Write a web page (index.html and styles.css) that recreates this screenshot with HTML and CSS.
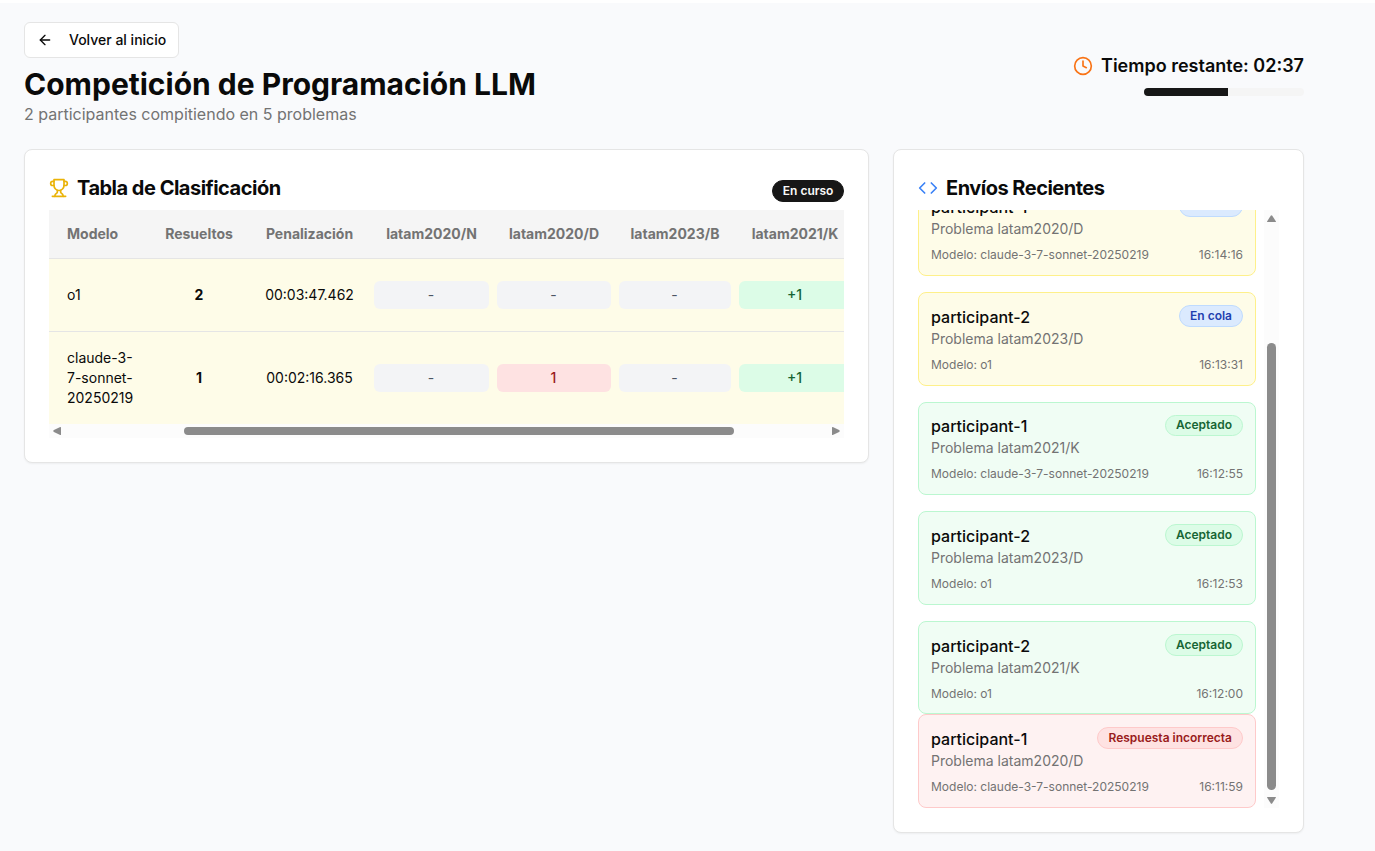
FILE: index.html
```html
<!DOCTYPE html>
<html lang="es">
<head>
<meta charset="utf-8">
<title>Competición de Programación LLM</title>
<link rel="stylesheet" href="styles.css">
</head>
<body>
<main class="page">
  <header class="header">
    <div class="intro">
      <button class="back">
        <svg class="icon-sm" viewBox="0 0 24 24"><path d="m12 19-7-7 7-7"/><path d="M19 12H5"/></svg>
        <span>Volver al inicio</span>
      </button>
      <h1 class="title">Competición de Programación LLM</h1>
      <p class="subtitle">2 participantes compitiendo en 5 problemas</p>
    </div>
    <div class="timer">
      <div class="timer-row">
        <svg class="icon orange" viewBox="0 0 24 24"><circle cx="12" cy="12" r="10"/><path d="M12 6v6l4 2"/></svg>
        <span>Tiempo restante: 02:37</span>
      </div>
      <div class="progress"><div class="progress-fill"></div></div>
    </div>
  </header>

  <div class="columns">
    <section class="card board">
      <div class="card-head">
        <h2 class="card-title">
          <svg class="icon gold" viewBox="0 0 24 24"><path d="M6 9H4.5a2.5 2.5 0 0 1 0-5H6"/><path d="M18 9h1.5a2.5 2.5 0 0 0 0-5H18"/><path d="M4 22h16"/><path d="M10 14.66V17c0 .55-.47.98-.97 1.21C7.85 18.75 7 20.24 7 22"/><path d="M14 14.66V17c0 .55.47.98.97 1.21C16.15 18.75 17 20.24 17 22"/><path d="M18 2H6v7a6 6 0 0 0 12 0V2Z"/></svg>
          <span>Tabla de Clasificación</span>
        </h2>
        <span class="badge dark">En curso</span>
      </div>
      <div class="table-view">
        <table class="table">
          <colgroup><col class="c-model"><col class="c-solved"><col class="c-penalty"><col class="c-n"><col class="c-d"><col class="c-b"><col class="c-k"></colgroup>
          <thead>
            <tr><th class="model">Modelo</th><th>Resueltos</th><th>Penalización</th><th>latam2020/N</th><th>latam2020/D</th><th>latam2023/B</th><th>latam2021/K</th></tr>
          </thead>
          <tbody>
            <tr class="row-first"><td class="model">o1</td><td class="solved">2</td><td>00:03:47.462</td><td><div class="cell">-</div></td><td><div class="cell">-</div></td><td><div class="cell">-</div></td><td><div class="cell ok">+1</div></td></tr>
            <tr class="row-second"><td class="model">claude-3-7-sonnet-20250219</td><td class="solved">1</td><td>00:02:16.365</td><td><div class="cell">-</div></td><td><div class="cell bad">1</div></td><td><div class="cell">-</div></td><td><div class="cell ok">+1</div></td></tr>
          </tbody>
        </table>
      </div>
      <div class="hbar">
        <svg class="arrow-h" viewBox="0 0 8 8"><path d="M8 .6v6.800Q8 8.200 7.200 7.900L.9 4.900Q-.4 4 .9 3.100L7.200.1Q8-.2 8 .6Z"/></svg>
        <div class="htrack"><div class="hthumb"></div></div>
        <svg class="arrow-h" viewBox="0 0 8 8"><path d="M0 .6v6.800Q0 8.200.8 7.900L7.100 4.900Q8.400 4 7.100 3.100L.8.1Q0-.2 0 .6Z"/></svg>
      </div>
    </section>

    <section class="card recent">
      <div class="card-head">
        <h2 class="card-title">
          <svg class="icon blue" viewBox="0 0 24 24"><path d="m16 18 6-6-6-6"/><path d="m8 6-6 6 6 6"/></svg>
          <span>Envíos Recientes</span>
        </h2>
      </div>
      <div class="feed">
        <div class="feed-view">
          <div class="list">
            <article class="entry queued"><div class="entry-top"><div><div class="name">participant-1</div><div class="problem">Problema latam2020/D</div></div><span class="badge b-blue">En cola</span></div><div class="meta"><span>Modelo: claude-3-7-sonnet-20250219</span><span>16:14:16</span></div></article>
            <article class="entry queued"><div class="entry-top"><div><div class="name">participant-2</div><div class="problem">Problema latam2023/D</div></div><span class="badge b-blue">En cola</span></div><div class="meta"><span>Modelo: o1</span><span>16:13:31</span></div></article>
            <article class="entry accepted"><div class="entry-top"><div><div class="name">participant-1</div><div class="problem">Problema latam2021/K</div></div><span class="badge b-green">Aceptado</span></div><div class="meta"><span>Modelo: claude-3-7-sonnet-20250219</span><span>16:12:55</span></div></article>
            <article class="entry accepted"><div class="entry-top"><div><div class="name">participant-2</div><div class="problem">Problema latam2023/D</div></div><span class="badge b-green">Aceptado</span></div><div class="meta"><span>Modelo: o1</span><span>16:12:53</span></div></article>
            <article class="entry accepted"><div class="entry-top"><div><div class="name">participant-2</div><div class="problem">Problema latam2021/K</div></div><span class="badge b-green">Aceptado</span></div><div class="meta"><span>Modelo: o1</span><span>16:12:00</span></div></article>
            <article class="entry rejected"><div class="entry-top"><div><div class="name">participant-1</div><div class="problem">Problema latam2020/D</div></div><span class="badge b-red">Respuesta incorrecta</span></div><div class="meta"><span>Modelo: claude-3-7-sonnet-20250219</span><span>16:11:59</span></div></article>
          </div>
        </div>
        <div class="vbar">
          <svg class="arrow-v" viewBox="0 0 9 7"><path d="M.6 7h7.800Q9.300 7 8.800 6.200L5.300.8Q4.500-.4 3.700.8L.2 6.200Q-.3 7 .6 7Z"/></svg>
          <div class="vtrack"><div class="vthumb"></div></div>
          <svg class="arrow-v" viewBox="0 0 9 7"><path d="M.6 0h7.800Q9.300 0 8.800.8L5.300 6.200Q4.500 7.400 3.700 6.200L.2.8Q-.3 0 .6 0Z"/></svg>
        </div>
      </div>
    </section>
  </div>
</main>
</body>
</html>
```
FILE: styles.css
```css
* { box-sizing: border-box; }
body {
  margin: 0;
  height: 851px;
  overflow: hidden;
  border-top: 3px solid #fff;
  background: #f9fafc;
  color: #0a0a0a;
  font: 14px/20px Inter, "Liberation Sans", sans-serif;
}
h1, h2, p { margin: 0; }
svg { display: block; flex: none; fill: none; stroke: currentColor; stroke-width: 2; stroke-linecap: round; stroke-linejoin: round; }
.icon { width: 20px; height: 20px; }
.icon-sm { width: 16px; height: 16px; }
.orange { color: #f97316; }
.gold { color: #eab308; }
.blue { color: #3b82f6; }

.page { width: 1304px; padding: 19px 0 0 24px; }
.header { display: flex; justify-content: space-between; align-items: center; height: 104px; }
.back {
  display: flex; align-items: center; gap: 16px;
  width: 155px; height: 36px; padding: 0 12px;
  border: 1px solid #e5e5e5; border-radius: 6px;
  background: #fff; color: #0a0a0a; font: 500 14px/20px Inter, sans-serif;
  white-space: nowrap;
}
.title { margin-top: 8px; font-size: 30px; line-height: 36px; font-weight: 700; }
.subtitle { font-size: 16px; line-height: 24px; color: #737373; }
.timer { display: flex; flex-direction: column; align-items: flex-end; gap: 8px; }
.timer-row { display: flex; align-items: center; gap: 8px; font-size: 18px; line-height: 28px; font-weight: 600; }
.progress { width: 160px; height: 8px; border-radius: 4px; overflow: hidden; background: #f5f5f5; }
.progress-fill { width: 84px; height: 8px; background: #171717; }

.columns { display: flex; align-items: flex-start; justify-content: space-between; margin-top: 23px; }
.card { padding: 24px; border: 1px solid #e5e5e5; border-radius: 8px; background: #fff; box-shadow: 0 1px 2px rgba(0, 0, 0, .05); }
.board { width: 845px; height: 314px; }
.recent { width: 411px; height: 684px; }
.card-head { display: flex; justify-content: space-between; align-items: flex-end; height: 28px; margin-bottom: 8px; }
.card-title { display: flex; align-items: center; gap: 8px; font-size: 20px; line-height: 28px; font-weight: 700; letter-spacing: -.5px; }
.badge { height: 21.8px; padding: 1.9px 10px; border: 1px solid; border-radius: 11px; font-size: 12px; line-height: 16px; font-weight: 600; white-space: nowrap; }
.dark { height: 22px; padding: 2px 9.6px; background: #171717; border-color: #171717; color: #fafafa; }
.b-blue { background: #dbeafe; border-color: #bfdbfe; color: #1e40af; }
.b-green { background: #dcfce7; border-color: #bbf7d0; color: #166534; }
.b-red { background: #fee2e2; border-color: #fecaca; color: #991b1b; }

.table-view { width: 795px; height: 214px; overflow: hidden; }
.table { width: 806px; table-layout: fixed; border-collapse: separate; border-spacing: 0; text-align: center; }
.c-model { width: 100px; }
.c-solved { width: 100px; }
.c-penalty { width: 121px; }
.c-n { width: 123px; }
.c-d { width: 122px; }
.c-b { width: 120px; }
.c-k { width: 120px; }
.table th { height: 49px; padding: 0; background: #f5f5f5; border-bottom: 1px solid #e5e5e5; color: #737373; font-weight: 700; }
.table td { padding: 0 4px; background: #fefce8; }
.table .model { padding: 0 14px 0 18px; text-align: left; }
.row-first td { height: 73px; border-bottom: 1px solid #e5e5e5; }
.row-second td { height: 92px; }
.table .solved { font-weight: 700; }
.cell { height: 28px; border-radius: 6px; padding-right: 1px; background: #f3f4f6; color: #4b5563; line-height: 28px; }
.cell.ok { background: #dcfce7; color: #166534; font-weight: 500; }
.cell.bad { background: #fee2e2; color: #991b1b; font-weight: 500; }
.hbar { display: flex; align-items: center; justify-content: space-between; height: 14px; padding: 0 4px; background: #fcfcfc; }
.htrack { width: 765px; padding-left: 120px; }
.hthumb { width: 550px; height: 8px; border-radius: 4px; background: #8b8b8b; }
.arrow-h { width: 8px; height: 8px; fill: #8b8b8b; stroke: none; }

.feed { display: flex; justify-content: space-between; width: 361px; height: 598px; }
.feed-view { width: 338px; height: 598px; overflow: hidden; }
.list { display: flex; flex-direction: column; gap: 16px; margin-top: -27.65px; }
.entry { flex: none; height: 93.6px; padding: 11.85px 12px; border: 1px solid; border-radius: 8px; }
.entry .badge { margin-top: .15px; }
.queued { background: #fefce8; border-color: #fef08a; }
.accepted { background: #f0fdf4; border-color: #bbf7d0; }
.rejected { margin-top: -16px; background: #fef2f2; border-color: #fecaca; }
.entry-top { display: flex; justify-content: space-between; align-items: flex-start; }
.name { font-size: 16px; line-height: 24px; font-weight: 500; }
.problem { color: #737373; }
.meta { display: flex; justify-content: space-between; margin-top: 8px; color: #737373; font-size: 12px; line-height: 16px; }
.vbar { display: flex; flex-direction: column; align-items: center; justify-content: space-between; width: 15px; padding: 5px 0 4px; background: #fcfcfc; }
.vtrack { height: 568px; padding-top: 117px; }
.vthumb { width: 9px; height: 447px; border-radius: 4.5px; background: #8b8b8b; }
.arrow-v { width: 9px; height: 7px; fill: #8b8b8b; stroke: none; }
```
